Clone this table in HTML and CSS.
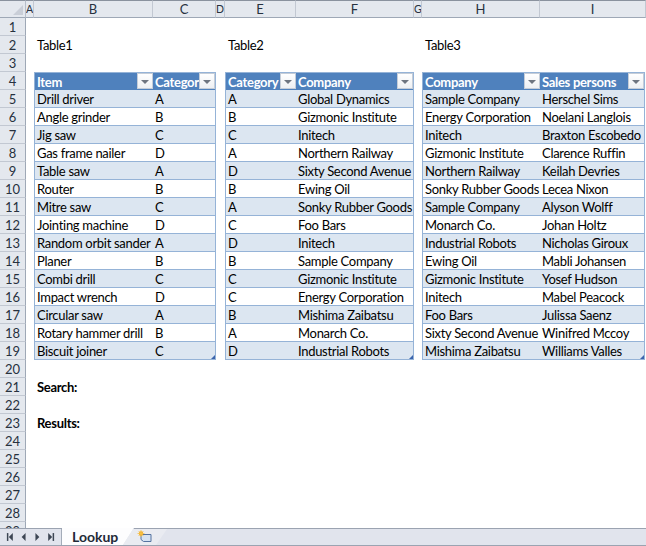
FILE: index.html
```html
<!DOCTYPE html>
<html>
<head>
<meta charset="utf-8">
<link rel="stylesheet" href="styles.css">
</head>
<body>
<div class="sheet">
  <div class="corner"><svg width="10" height="10" viewBox="0 0 10 10"><path d="M10 0 L10 10 L0 10 Z" fill="#c9ced7"/></svg></div>
  <div class="ch narrow">A</div><div class="ch">B</div><div class="ch">C</div><div class="ch narrow">D</div><div class="ch">E</div><div class="ch">F</div><div class="ch narrow">G</div><div class="ch">H</div><div class="ch">I</div>

  <div class="rh r1">1</div><div class="rh r2">2</div><div class="rh r3">3</div><div class="rh r4">4</div><div class="rh r5">5</div>
  <div class="rh r6">6</div><div class="rh r7">7</div><div class="rh r8">8</div><div class="rh r9">9</div><div class="rh r10">10</div>
  <div class="rh r11">11</div><div class="rh r12">12</div><div class="rh r13">13</div><div class="rh r14">14</div><div class="rh r15">15</div>
  <div class="rh r16">16</div><div class="rh r17">17</div><div class="rh r18">18</div><div class="rh r19">19</div><div class="rh r20">20</div>
  <div class="rh r21">21</div><div class="rh r22">22</div><div class="rh r23">23</div><div class="rh r24">24</div><div class="rh r25">25</div>
  <div class="rh r26">26</div><div class="rh r27">27</div><div class="rh r28">28</div><div class="rh r29">29</div>

  <div class="label lb-t1">Table1</div>
  <div class="label lb-t2">Table2</div>
  <div class="label lb-t3">Table3</div>
  <div class="label bold lb-search">Search:</div>
  <div class="label bold lb-results">Results:</div>

  <div class="tbl t1">
    <div class="tr head"><div class="th"><span>Item</span><i class="dd"></i></div><div class="th"><span>Category</span><i class="dd"></i></div></div>
    <div class="tr"><div class="td">Drill driver</div><div class="td">A</div></div>
    <div class="tr"><div class="td">Angle grinder</div><div class="td">B</div></div>
    <div class="tr"><div class="td">Jig saw</div><div class="td">C</div></div>
    <div class="tr"><div class="td">Gas frame nailer</div><div class="td">D</div></div>
    <div class="tr"><div class="td">Table saw</div><div class="td">A</div></div>
    <div class="tr"><div class="td">Router</div><div class="td">B</div></div>
    <div class="tr"><div class="td">Mitre saw</div><div class="td">C</div></div>
    <div class="tr"><div class="td">Jointing machine</div><div class="td">D</div></div>
    <div class="tr"><div class="td">Random orbit sander</div><div class="td">A</div></div>
    <div class="tr"><div class="td">Planer</div><div class="td">B</div></div>
    <div class="tr"><div class="td">Combi drill</div><div class="td">C</div></div>
    <div class="tr"><div class="td">Impact wrench</div><div class="td">D</div></div>
    <div class="tr"><div class="td">Circular saw</div><div class="td">A</div></div>
    <div class="tr"><div class="td">Rotary hammer drill</div><div class="td">B</div></div>
    <div class="tr"><div class="td">Biscuit joiner</div><div class="td">C</div></div>
    <i class="grip"></i>
  </div>

  <div class="tbl t2">
    <div class="tr head"><div class="th"><span>Category</span><i class="dd"></i></div><div class="th"><span>Company</span><i class="dd"></i></div></div>
    <div class="tr"><div class="td">A</div><div class="td">Global Dynamics</div></div>
    <div class="tr"><div class="td">B</div><div class="td">Gizmonic Institute</div></div>
    <div class="tr"><div class="td">C</div><div class="td">Initech</div></div>
    <div class="tr"><div class="td">A</div><div class="td">Northern Railway</div></div>
    <div class="tr"><div class="td">D</div><div class="td">Sixty Second Avenue</div></div>
    <div class="tr"><div class="td">B</div><div class="td">Ewing Oil</div></div>
    <div class="tr"><div class="td">A</div><div class="td">Sonky Rubber Goods</div></div>
    <div class="tr"><div class="td">C</div><div class="td">Foo Bars</div></div>
    <div class="tr"><div class="td">D</div><div class="td">Initech</div></div>
    <div class="tr"><div class="td">B</div><div class="td">Sample Company</div></div>
    <div class="tr"><div class="td">C</div><div class="td">Gizmonic Institute</div></div>
    <div class="tr"><div class="td">C</div><div class="td">Energy Corporation</div></div>
    <div class="tr"><div class="td">B</div><div class="td">Mishima Zaibatsu</div></div>
    <div class="tr"><div class="td">A</div><div class="td">Monarch Co.</div></div>
    <div class="tr"><div class="td">D</div><div class="td">Industrial Robots</div></div>
    <i class="grip"></i>
  </div>

  <div class="tbl t3">
    <div class="tr head"><div class="th"><span>Company</span><i class="dd"></i></div><div class="th"><span>Sales persons</span><i class="dd"></i></div></div>
    <div class="tr"><div class="td">Sample Company</div><div class="td">Herschel Sims</div></div>
    <div class="tr"><div class="td">Energy Corporation</div><div class="td">Noelani Langlois</div></div>
    <div class="tr"><div class="td">Initech</div><div class="td">Braxton Escobedo</div></div>
    <div class="tr"><div class="td">Gizmonic Institute</div><div class="td">Clarence Ruffin</div></div>
    <div class="tr"><div class="td">Northern Railway</div><div class="td">Keilah Devries</div></div>
    <div class="tr"><div class="td">Sonky Rubber Goods</div><div class="td">Lecea Nixon</div></div>
    <div class="tr"><div class="td">Sample Company</div><div class="td">Alyson Wolff</div></div>
    <div class="tr"><div class="td">Monarch Co.</div><div class="td">Johan Holtz</div></div>
    <div class="tr"><div class="td">Industrial Robots</div><div class="td">Nicholas Giroux</div></div>
    <div class="tr"><div class="td">Ewing Oil</div><div class="td">Mabli Johansen</div></div>
    <div class="tr"><div class="td">Gizmonic Institute</div><div class="td">Yosef Hudson</div></div>
    <div class="tr"><div class="td">Initech</div><div class="td">Mabel Peacock</div></div>
    <div class="tr"><div class="td">Foo Bars</div><div class="td">Julissa Saenz</div></div>
    <div class="tr"><div class="td">Sixty Second Avenue</div><div class="td">Winifred Mccoy</div></div>
    <div class="tr"><div class="td">Mishima Zaibatsu</div><div class="td">Williams Valles</div></div>
    <i class="grip"></i>
  </div>
</div>

<div class="tabbar">
  <div class="nav">
    <svg width="62" height="16" viewBox="0 0 62 16">
      <rect x="7" y="4" width="1.5" height="8" fill="#3d4654"/>
      <path d="M13 4 L9 8 L13 12 Z" fill="#3d4654"/>
      <path d="M26 4 L22 8 L26 12 Z" fill="#3d4654"/>
      <path d="M36 4 L40 8 L36 12 Z" fill="#3d4654"/>
      <path d="M49 4 L53 8 L49 12 Z" fill="#3d4654"/>
      <rect x="53.5" y="4" width="1.5" height="8" fill="#3d4654"/>
    </svg>
  </div>
  <div class="tab active">Lookup</div>
  <div class="tab newtab">
    <svg width="22" height="14" viewBox="0 0 22 14">
      <path d="M7 4.5 H17 V11.5 H9.5 L7 9.5 Z" fill="#d5e2f2" stroke="#5573a0" stroke-width="1"/>
      <circle cx="7" cy="3.5" r="2.2" fill="#f2a81d"/>
      <path d="M7 0 V7 M3.5 3.5 H10.5 M4.6 1.1 L9.4 5.9 M9.4 1.1 L4.6 5.9" stroke="#f6c34a" stroke-width="0.8"/>
    </svg>
  </div>
</div>
</body>
</html>
```

FILE: styles.css
```css
html, body {
  margin: 0;
  padding: 0;
}
body {
  width: 646px;
  height: 546px;
  overflow: hidden;
  background: #ffffff;
  font-family: Lato, "Liberation Sans", sans-serif;
  font-size: 13px;
  letter-spacing: -0.3px;
  color: #000;
}

.sheet {
  display: grid;
  grid-template-columns: 26px 8px 119px 63px 9px 71px 118px 8px 118px 106px;
  grid-template-rows: repeat(30, 18px);
  height: 528px;
  overflow: hidden;
  background: #fff;
}

.corner {
  grid-row: 1;
  grid-column: 1;
  box-sizing: border-box;
  background: #e4e8ee;
  border-top: 1px solid #8a929e;
  border-right: 1px solid #b7bec9;
  border-bottom: 1px solid #9ea8b6;
  display: flex;
  align-items: flex-end;
  justify-content: flex-end;
  padding: 0 2px 2px 0;
}

.ch {
  grid-row: 1;
  box-sizing: border-box;
  background: #e4e8ee;
  border-top: 1px solid #8a929e;
  border-right: 1px solid #c2c8d2;
  border-bottom: 1px solid #9ea8b6;
  text-align: center;
  line-height: 16px;
  font-size: 13px;
  letter-spacing: 0;
  color: #27313e;
  overflow: hidden;
  white-space: nowrap;
}
.ch.narrow {
  font-size: 10.5px;
  text-align: left;
  padding-left: 0;
}

.rh {
  grid-column: 1;
  box-sizing: border-box;
  background: #e4e8ee;
  border-bottom: 1px solid #c2c8d2;
  border-right: 1px solid #9ea8b6;
  text-align: center;
  line-height: 18px;
  font-size: 13px;
  letter-spacing: 0;
  color: #27313e;
}
.r1 { grid-row: 2; } .r2 { grid-row: 3; } .r3 { grid-row: 4; } .r4 { grid-row: 5; }
.r5 { grid-row: 6; } .r6 { grid-row: 7; } .r7 { grid-row: 8; } .r8 { grid-row: 9; }
.r9 { grid-row: 10; } .r10 { grid-row: 11; } .r11 { grid-row: 12; } .r12 { grid-row: 13; }
.r13 { grid-row: 14; } .r14 { grid-row: 15; } .r15 { grid-row: 16; } .r16 { grid-row: 17; }
.r17 { grid-row: 18; } .r18 { grid-row: 19; } .r19 { grid-row: 20; } .r20 { grid-row: 21; }
.r21 { grid-row: 22; } .r22 { grid-row: 23; } .r23 { grid-row: 24; } .r24 { grid-row: 25; }
.r25 { grid-row: 26; } .r26 { grid-row: 27; } .r27 { grid-row: 28; } .r28 { grid-row: 29; }
.r29 { grid-row: 30; }

.label {
  line-height: 18px;
  padding-left: 3px;
  white-space: nowrap;
}
.bold { font-weight: bold; }
.lb-t1 { grid-row: 3; grid-column: 3 / 5; }
.lb-t2 { grid-row: 3; grid-column: 6 / 8; }
.lb-t3 { grid-row: 3; grid-column: 9 / 11; }
.lb-search { grid-row: 22; grid-column: 3 / 5; }
.lb-results { grid-row: 24; grid-column: 3 / 5; }

.tbl {
  grid-row: 5 / 21;
  position: relative;
  box-sizing: border-box;
  border: 1px solid #95b3d7;
  display: flex;
  flex-direction: column;
}
.t1 { grid-column: 3 / 5; }
.t2 { grid-column: 6 / 8; }
.t3 { grid-column: 9 / 11; margin-right: 1px; }

.tr {
  display: grid;
  box-sizing: border-box;
  height: 18px;
  border-bottom: 1px solid #95b3d7;
  background: #fff;
}
.t1 .tr { grid-template-columns: 118px 1fr; }
.t2 .tr { grid-template-columns: 70px 1fr; }
.t3 .tr { grid-template-columns: 117px 1fr; }

.tr:nth-child(even) { background: #dce6f1; }
.tr:nth-child(16) { border-bottom: none; height: 17px; }
.tr.head {
  height: 17px;
  border-bottom: none;
  background: #4f81bd;
}

.td {
  line-height: 18px;
  height: 17px;
  padding-left: 2px;
  white-space: nowrap;
  overflow: hidden;
}
.th {
  display: flex;
  align-items: flex-start;
  overflow: hidden;
  color: #fff;
  font-weight: bold;
  line-height: 18px;
  height: 17px;
}
.th span {
  flex: 1;
  min-width: 0;
  overflow: hidden;
  white-space: nowrap;
  padding-left: 2px;
}
.dd {
  flex: none;
  width: 16px;
  height: 16px;
  box-sizing: border-box;
  border: 1px solid #c5cdd8;
  background: linear-gradient(#ffffff, #eef0f3);
  position: relative;
}
.dd::after {
  content: "";
  position: absolute;
  left: 3px;
  top: 6px;
  border-left: 4px solid transparent;
  border-right: 4px solid transparent;
  border-top: 4px solid #6e7580;
}

.grip {
  position: absolute;
  right: 0;
  bottom: 0;
  width: 0;
  height: 0;
  border-left: 4px solid transparent;
  border-bottom: 4px solid #3b64ad;
}

.tabbar {
  height: 18px;
  box-sizing: border-box;
  background: #e1e4ed;
  border-top: 1px solid #9ba3b1;
  border-bottom: 1px solid #9ba3b1;
  display: flex;
  align-items: stretch;
}
.nav {
  width: 62px;
  box-sizing: border-box;
  border-right: 1px solid #a4acb9;
  display: flex;
  align-items: center;
}
.nav svg { display: block; }
.tab {
  display: flex;
  align-items: center;
  box-sizing: border-box;
}
.tab.active {
  width: 72px;
  margin-top: -1px;
  padding-left: 10px;
  font-weight: bold;
  font-size: 14px;
  letter-spacing: 0;
  color: #1f2a38;
  background: #fdfdfe;
  clip-path: polygon(0 0, 100% 0, 61px 100%, 0 100%);
}
.tab.newtab {
  width: 44px;
  margin-left: -11px;
  padding-left: 11px;
  background: #e9ebf1;
  clip-path: polygon(10px 0, 100% 0, 33px 100%, 0 100%);
}
.tab.newtab svg { display: block; }
```
